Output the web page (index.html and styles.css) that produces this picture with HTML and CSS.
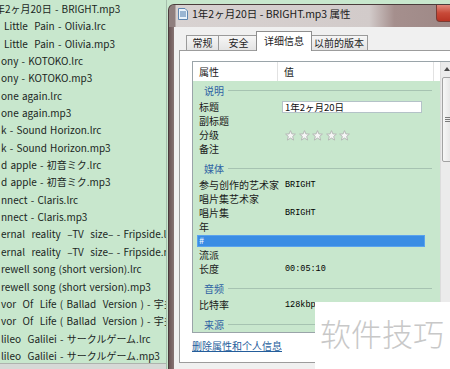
FILE: index.html
```html
<!DOCTYPE html>
<html>
<head>
<meta charset="utf-8">
<link rel="stylesheet" href="styles.css">
</head>
<body>
<div class="screen">
  <div class="files">
    <div class="file-list">
      <div class="file cut">年2ヶ月20日 - BRIGHT.mp3</div>
      <div class="file indent">Little  Pain - Olivia.lrc</div>
      <div class="file indent">Little  Pain - Olivia.mp3</div>
      <div class="file">ony - KOTOKO.lrc</div>
      <div class="file">ony - KOTOKO.mp3</div>
      <div class="file">one again.lrc</div>
      <div class="file">one again.mp3</div>
      <div class="file">k - Sound Horizon.lrc</div>
      <div class="file">k - Sound Horizon.mp3</div>
      <div class="file">d apple - 初音ミク.lrc</div>
      <div class="file">d apple - 初音ミク.mp3</div>
      <div class="file">nnect - Claris.lrc</div>
      <div class="file">nnect - Claris.mp3</div>
      <div class="file">ernal  reality  –TV  size– - Fripside.lrc</div>
      <div class="file">ernal  reality  –TV  size– - Fripside.mp3</div>
      <div class="file">rewell song (short version).lrc</div>
      <div class="file">rewell song (short version).mp3</div>
      <div class="file">vor  Of  Life ( Ballad  Version ) - 宇多田</div>
      <div class="file">vor  Of  Life ( Ballad  Version ) - 宇多田</div>
      <div class="file">lileo  Galilei - サークルゲーム.lrc</div>
      <div class="file">lileo  Galilei - サークルゲーム.mp3</div>
    </div>
    <div class="files-foot"></div>
  </div>

  <div class="dialog">
    <div class="titlebar">
      <svg class="title-icon" width="10" height="12" viewBox="0 0 10 12">
        <path d="M0.5 0.5 H7 L9.5 3 V11.5 H0.5 Z" fill="#eaf3fb" stroke="#5f86b0"/>
        <path d="M2 4 H8 M2 6 H8 M2 8 H8" stroke="#4a78aa" stroke-width="1"/>
      </svg>
      <span class="title">1年2ヶ月20日 - BRIGHT.mp3 属性</span>
      <div class="close"></div>
    </div>
    <div class="client">
      <div class="tabs">
        <div class="tab w1">常规</div>
        <div class="tab w2">安全</div>
        <div class="tab active w3">详细信息</div>
        <div class="tab w4">以前的版本</div>
      </div>
      <div class="panel">
        <div class="listview">
          <div class="lv-main">
            <div class="lv-head">
              <div class="hc c1">属性</div>
              <div class="hc c2">值</div>
              <div class="hc c3"></div>
            </div>
            <div class="lv-body">
              <div class="grp first"><span>说明</span><i></i></div>
              <div class="row"><span class="k">标题</span><span class="v"><span class="edit">1年2ヶ月20日</span></span></div>
              <div class="row"><span class="k">副标题</span><span class="v"></span></div>
              <div class="row"><span class="k">分级</span><span class="v stars">
                <svg width="11" height="11" viewBox="0 0 11 11"><polygon points="5.5,0.6 6.9,3.9 10.4,4.1 7.7,6.4 8.6,10.1 5.5,8.1 2.4,10.1 3.3,6.4 0.6,4.1 4.1,3.9" fill="#f6f6f6" stroke="#b5b9b6"/></svg>
                <svg width="11" height="11" viewBox="0 0 11 11"><polygon points="5.5,0.6 6.9,3.9 10.4,4.1 7.7,6.4 8.6,10.1 5.5,8.1 2.4,10.1 3.3,6.4 0.6,4.1 4.1,3.9" fill="#f6f6f6" stroke="#b5b9b6"/></svg>
                <svg width="11" height="11" viewBox="0 0 11 11"><polygon points="5.5,0.6 6.9,3.9 10.4,4.1 7.7,6.4 8.6,10.1 5.5,8.1 2.4,10.1 3.3,6.4 0.6,4.1 4.1,3.9" fill="#f6f6f6" stroke="#b5b9b6"/></svg>
                <svg width="11" height="11" viewBox="0 0 11 11"><polygon points="5.5,0.6 6.9,3.9 10.4,4.1 7.7,6.4 8.6,10.1 5.5,8.1 2.4,10.1 3.3,6.4 0.6,4.1 4.1,3.9" fill="#f6f6f6" stroke="#b5b9b6"/></svg>
                <svg width="11" height="11" viewBox="0 0 11 11"><polygon points="5.5,0.6 6.9,3.9 10.4,4.1 7.7,6.4 8.6,10.1 5.5,8.1 2.4,10.1 3.3,6.4 0.6,4.1 4.1,3.9" fill="#f6f6f6" stroke="#b5b9b6"/></svg>
              </span></div>
              <div class="row"><span class="k">备注</span><span class="v"></span></div>
              <div class="grp"><span>媒体</span><i></i></div>
              <div class="row"><span class="k">参与创作的艺术家</span><span class="v mono">BRIGHT</span></div>
              <div class="row"><span class="k">唱片集艺术家</span><span class="v"></span></div>
              <div class="row"><span class="k">唱片集</span><span class="v mono">BRIGHT</span></div>
              <div class="row"><span class="k">年</span><span class="v"></span></div>
              <div class="row selected"><span class="sel">#</span></div>
              <div class="row"><span class="k">流派</span><span class="v"></span></div>
              <div class="row"><span class="k">长度</span><span class="v mono">00:05:10</span></div>
              <div class="grp"><span>音频</span><i></i></div>
              <div class="row"><span class="k">比特率</span><span class="v mono">128kbps</span></div>
              <div class="grp"><span>来源</span><i></i></div>
            </div>
          </div>
          <div class="vscroll">
            <div class="arrow"><b></b></div>
            <div class="thumb"><b></b><b></b><b></b></div>
          </div>
        </div>
        <a class="link">删除属性和个人信息</a>
      </div>
    </div>
  </div>

  <div class="watermark">软件技巧</div>
</div>
</body>
</html>
```
FILE: styles.css
```css
* { box-sizing: border-box; margin: 0; padding: 0; }

body {
  width: 450px;
  height: 369px;
  overflow: hidden;
  background: #f0f0f0;
  font-family: "Noto Sans CJK SC", "Noto Sans", sans-serif;
}

.screen {
  position: relative;
  display: flex;
  width: 450px;
  height: 369px;
  overflow: hidden;
  background: #c8e7cd;
}

/* ---------- left file list ---------- */
.files {
  width: 167px;
  flex: none;
  display: flex;
  flex-direction: column;
  border-right: 1px solid #a7bfad;
}
.file-list {
  flex: 1;
  overflow: hidden;
}
.file {
  height: 17.35px;
  line-height: 17.35px;
  font-size: 10px;
  word-spacing: 1px;
  white-space: pre;
  color: #1a261d;
  padding-left: 1px;
  overflow: hidden;
}
.file.indent { padding-left: 4px; }
.file.cut { margin-left: -6px; }
.files-foot {
  height: 6px;
  flex: none;
  background: #d6d9d6;
  border-top: 1px solid #aeb3ae;
}

/* ---------- dialog ---------- */
.dialog {
  width: 320px;
  flex: none;
  margin-left: 1px;
  margin-top: 4px;
  height: 365px;
  border: 1px solid #4b3c3c;
  border-bottom: none;
  border-radius: 6px 0 0 0;
  background: linear-gradient(90deg, #6a5555 0, #8c7a79 6px, #8c7a79 100%);
  padding: 0 5px;
  display: flex;
  flex-direction: column;
}

.titlebar {
  height: 22px;
  flex: none;
  display: flex;
  align-items: flex-start;
  margin-left: -5px;
  padding-left: 5px;
  border-radius: 5px 0 0 0;
  background: linear-gradient(90deg, #8f7f7e 0, #8f7f7e 6px, #d8d2d1 7px, #d2cbca 64%, #a58f8d 72%, #9a8583 100%);
}
.title-icon {
  margin-left: 4px;
  margin-top: 3px;
  flex: none;
}
.title {
  margin-left: 4px;
  margin-top: 2px;
  font-size: 10.5px;
  line-height: 14px;
  color: #1b1b1b;
  white-space: nowrap;
}
.close {
  margin-left: auto;
  margin-right: 3px;
  width: 43px;
  height: 17px;
  flex: none;
  border: 1px solid #7a3b33;
  border-top: none;
  border-radius: 0 0 4px 4px;
  background: linear-gradient(#e08a7c, #c84a38 50%, #b83424);
}

.client {
  flex: 1;
  background: #f0f0f0;
  display: flex;
  flex-direction: column;
}

.tabs {
  height: 23px;
  flex: none;
  display: flex;
  align-items: flex-end;
  padding-left: 12px;
}
.tab {
  height: 15px;
  border: 1px solid #9a9a9a;
  border-bottom: none;
  margin-right: -1px;
  background: linear-gradient(#f6f6f6, #e4e4e4);
  font-size: 10px;
  line-height: 14px;
  text-align: center;
  color: #222;
}
.tab.w1 { width: 33px; }
.tab.w2 { width: 41px; }
.tab.w3 { width: 56px; }
.tab.w4 { width: 58px; }
.tab.active {
  height: 20px;
  background: #fff;
  margin: 0 -2px -1px -2px;
  line-height: 17px;
  position: relative;
  z-index: 1;
  border-color: #8e8e8e;
}

.panel {
  height: 313px;
  flex: none;
  margin: 0 5px;
  border: 1px solid #9c9c9c;
  background: #fff;
  padding: 10px 0 0 12px;
}

.listview {
  width: 262px;
  height: 272px;
  border: 1px solid #9aa4a9;
  display: flex;
}
.lv-main {
  width: 247px;
  flex: none;
  display: flex;
  flex-direction: column;
}
.lv-head {
  height: 19px;
  flex: none;
  display: flex;
  background: #fff;
  font-size: 10px;
  line-height: 19px;
  color: #1a1a1a;
}
.hc { padding-left: 6px; }
.hc.c1 { width: 85px; border-right: 1px solid #e2e2e2; }
.hc.c2 { width: 156px; border-right: 1px solid #e2e2e2; }
.hc.c3 { flex: 1; }

.lv-body {
  flex: 1;
  overflow: hidden;
  background: #c8e7cd;
  font-size: 10px;
  color: #1a1a1a;
}
.grp {
  height: 22px;
  display: flex;
  align-items: center;
  padding-left: 11px;
  padding-top: 2px;
  color: #2f62a3;
}
.grp.first { height: 19px; padding-top: 0; }
.grp i {
  flex: 1;
  height: 1px;
  background: #a6c3b1;
  margin-left: 4px;
  margin-right: 8px;
}
.row {
  height: 14px;
  display: flex;
  align-items: center;
  line-height: 14px;
}
.k {
  width: 85px;
  flex: none;
  padding-left: 6px;
  white-space: nowrap;
}
.v {
  padding-left: 7px;
  display: flex;
  align-items: center;
  white-space: nowrap;
}
.v.mono {
  font-family: "Liberation Mono", monospace;
  font-size: 8.5px;
  color: #000;
}
.v.stars { gap: 2.5px; padding-left: 7px; }
.edit {
  margin-left: -3px;
  width: 140px;
  height: 12px;
  border: 1px solid #b4c2c8;
  background: #fff;
  padding-left: 2px;
  line-height: 10px;
  font-size: 9.5px;
  color: #111;
}
.row.selected { padding: 1px 15px 1px 4px; }
.sel {
  flex: 1;
  height: 12px;
  background: #3a8de4;
  border: 1px solid #5aa3ee;
  color: #fff;
  line-height: 10px;
  padding-left: 1px;
  font-size: 9px;
}

.vscroll {
  flex: 1;
  background: #ebebeb;
  border-left: 1px solid #dcdcdc;
  display: flex;
  flex-direction: column;
}
.arrow {
  height: 14px;
  display: flex;
  align-items: center;
  justify-content: center;
}
.arrow b {
  width: 0;
  height: 0;
  border-left: 3px solid transparent;
  border-right: 3px solid transparent;
  border-bottom: 4px solid #4a4a4a;
}
.thumb {
  margin: 1px 0 0 1px;
  height: 85px;
  border: 1px solid #a2a2a2;
  border-radius: 2px;
  background: linear-gradient(90deg, #f7f7f7, #e3e3e3);
  display: flex;
  flex-direction: column;
  align-items: center;
  justify-content: center;
  gap: 1px;
}
.thumb b {
  width: 6px;
  height: 1px;
  background: #7a7a7a;
}

.link {
  display: block;
  margin-top: 7px;
  font-size: 10px;
  line-height: 12px;
  color: #245d9b;
  text-decoration: underline;
}

/* ---------- watermark overlay ---------- */
.watermark {
  position: absolute;
  left: 315px;
  top: 302px;
  width: 135px;
  height: 67px;
  background: #fff;
  display: flex;
  align-items: center;
  padding-left: 5px;
  padding-bottom: 6px;
  font-size: 31px;
  font-weight: 300;
  color: #c8c8c8;
  white-space: nowrap;
}
```
